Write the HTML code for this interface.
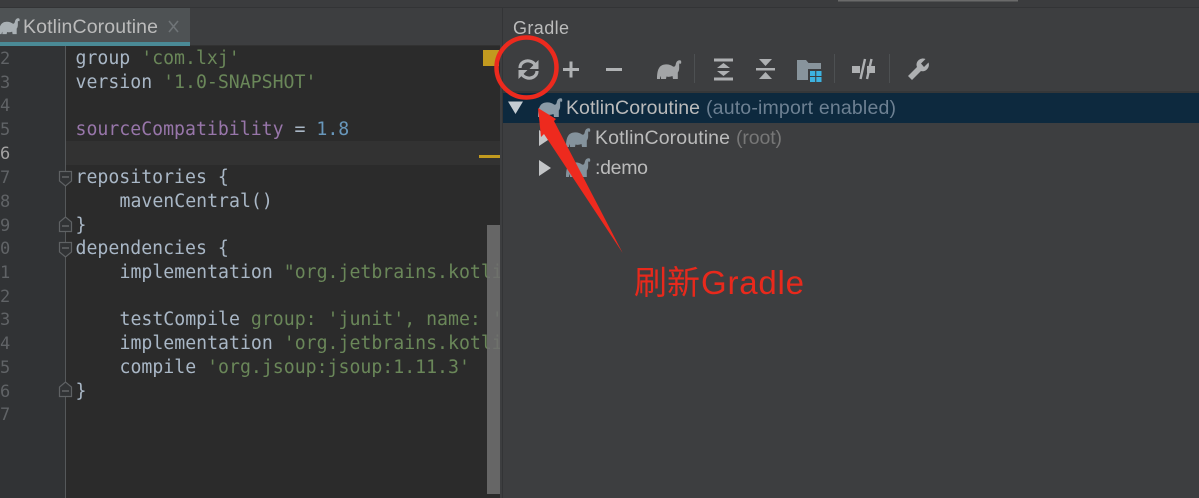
<!DOCTYPE html>
<html><head><meta charset="utf-8"><style>
html,body{margin:0;padding:0;background:#3d3e40;width:1199px;height:498px;overflow:hidden}
svg{display:block;filter:blur(.35px)}
.c{font-family:"DejaVu Sans Mono","Liberation Mono",monospace;font-size:18.2px;fill:#a9b7c6}
.s{fill:#6a8759}.p{fill:#9876aa}.n{fill:#6897bb}
.ln{font-family:"DejaVu Sans Mono",monospace;font-size:17px;fill:#606366}
.u{font-family:"Liberation Sans",sans-serif;font-size:19.5px;fill:#bbbbbb}
.d{fill:#84929c}
</style></head><body>
<svg width="1199" height="498" viewBox="0 0 1199 498" xmlns="http://www.w3.org/2000/svg">
<defs>
<path id="e" d="M0 19C0 10 2 5 8 4.500C11 4 14 5 16 6.500C17.500 7.300 18.500 6 18.800 4C19.300 1.500 21 0 23 .3C24.300 .6 24.500 2 24 3.800L22.300 3.500C21.800 6 23 10 20.800 12.500L20.800 19L16 19L15.500 16C13 17 11 17 9.500 16.500L9 19L4 19L4 16C3.300 17 3 18 3 19Z"/>
<clipPath id="ed"><rect x="0" y="46" width="500" height="452"/></clipPath>
</defs>
<rect width="1199" height="498" fill="#3d3e40"/>
<rect width="1199" height="7" fill="#3b3c3e"/>
<rect y="7" width="1199" height="1" fill="#333436"/>
<rect x="838" y="0" width="180" height="1.500" fill="#6a6a6a"/>
<!-- tab -->
<rect x="0" y="8" width="190" height="35" fill="#4e5254"/>
<rect x="0" y="42" width="190" height="4" fill="#4a8a96"/>
<rect x="190" y="45" width="310" height="1" fill="#323232"/>
<use href="#e" transform="translate(-1 18) scale(.85)" fill="#a9b0b4"/>
<text class="u" x="23" y="33" textLength="135">KotlinCoroutine</text>
<path d="M169 21L178 32M178 21L169 32" stroke="#6f7477" stroke-width="1.600"/>
<!-- editor -->
<rect x="0" y="46" width="500" height="452" fill="#2b2b2b"/>
<rect x="0" y="46" width="65" height="452" fill="#313335"/>
<rect x="65" y="141" width="435" height="24" fill="#323232"/>
<rect x="65" y="46" width="1" height="452" fill="#55585a"/>
<g class="ln">
<text x="0" y="64">2</text><text x="0" y="88">3</text><text x="0" y="111">4</text><text x="0" y="135">5</text>
<text x="0" y="159" style="fill:#a4a3a3">6</text><text x="0" y="183">7</text><text x="0" y="207">8</text><text x="0" y="231">9</text>
<text x="0" y="254">0</text><text x="0" y="278">1</text><text x="0" y="302">2</text><text x="0" y="325">3</text>
<text x="0" y="349">4</text><text x="0" y="373">5</text><text x="0" y="397">6</text><text x="0" y="420">7</text>
</g>
<g fill="#313335" stroke="#5f6264" stroke-width="1.200">
<path d="M59.500 171.500H71.500V181L65.500 186L59.500 181Z"/>
<path d="M59.500 231.500H71.500V222L65.500 217L59.500 222Z"/>
<path d="M59.500 242.500H71.500V252L65.500 257L59.500 252Z"/>
<path d="M59.500 396.500H71.500V387L65.500 382L59.500 387Z"/>
</g>
<path d="M62 177H69M62 226H69M62 248H69M62 391H69" stroke="#7a7d7f" stroke-width="1"/>
<g class="c" clip-path="url(#ed)">
<text x="75.500" y="64">group <tspan class="s">'com.lxj'</tspan></text>
<text x="75.500" y="88">version <tspan class="s">'1.0-SNAPSHOT'</tspan></text>
<text x="75.500" y="135"><tspan class="p">sourceCompatibility</tspan> = <tspan class="n">1.8</tspan></text>
<text x="75.500" y="183">repositories {</text>
<text x="119.500" y="207">mavenCentral()</text>
<text x="75.500" y="231">}</text>
<text x="75.500" y="254">dependencies {</text>
<text x="119.500" y="278">implementation <tspan class="s">"org.jetbrains.kotlin</tspan></text>
<text x="119.500" y="325">testCompile <tspan class="s">group: 'junit', name: '</tspan></text>
<text x="119.500" y="349">implementation <tspan class="s">'org.jetbrains.kotlin</tspan></text>
<text x="119.500" y="373">compile <tspan class="s">'org.jsoup:jsoup:1.11.3'</tspan></text>
<text x="75.500" y="397">}</text>
</g>
<rect x="487" y="225" width="13" height="269" fill="#6e6e6e" opacity=".88"/>
<rect x="483" y="50" width="16" height="16" fill="#c29a1f"/>
<rect x="479" y="155" width="24" height="3" fill="#c29a1f"/>
<!-- gradle panel -->
<rect x="500" y="8" width="699" height="490" fill="#3d3e40"/>
<rect x="502" y="8" width="1" height="490" fill="#333436"/>
<text class="u" x="513" y="34" textLength="56" style="font-size:18px">Gradle</text>
<rect x="503" y="91" width="696" height="2" fill="#353739"/>
<rect x="503" y="93" width="696" height="30" fill="#0d293e"/>
<!-- toolbar -->
<g fill="none" stroke="#aeb0b2" stroke-width="3.200">
<path d="M520 68C520 62.500 526 59.500 531 61.500C533 62.300 534.500 63.500 535 65"/>
<path d="M537 71C537 76.500 531 79.500 526 77.500C524 76.700 522.500 75.500 522 74"/>
</g>
<path d="M538.500 60V69H529.500ZM518.500 79V70H527.500Z" fill="#aeb0b2"/>
<path d="M563 69.500H579M571 61.500V77.500" stroke="#b0b2b4" stroke-width="3"/>
<path d="M606 69.500H622" stroke="#b0b2b4" stroke-width="3"/>
<use href="#e" transform="translate(657 60)" fill="#a3a5a7"/>
<path d="M694.500 54V83M834.500 54V83M889.500 54V83" stroke="#4d5052" stroke-width="1"/>
<g fill="#aeb0b2">
<rect x="714" y="58.500" width="19" height="3"/><rect x="714" y="77.500" width="19" height="3"/>
<path d="M723.500 63L730 68H717ZM723.500 76L730 71H717Z"/>
<rect x="756" y="68" width="19" height="2.500"/>
<path d="M759 59H772L765.500 66ZM759 79H772L765.500 72Z"/>
<rect x="852" y="66" width="8" height="7"/>
<rect x="867" y="66" width="8" height="7"/>
</g>
<path d="M860.500 79L865 59M867 79L871.500 59" stroke="#aeb0b2" stroke-width="2.400"/>
<path d="M797 60H806L808.500 63H821V80H797Z" fill="#88949c"/>
<rect x="808" y="69" width="16" height="15" fill="#3d3e40"/>
<g fill="#3db2e0"><rect x="810" y="71" width="5.200" height="5"/><rect x="816.300" y="71" width="5.200" height="5"/><rect x="810" y="77" width="5.200" height="5"/><rect x="816.300" y="77" width="5.200" height="5"/></g>
<path d="M908 76L917 67C915 62 920 57 925.500 59L921 63.500L924 67L928.500 62.500C930.500 68 925 72.500 921 71L912 80Z" fill="#aeb0b2"/>
<!-- tree -->
<path d="M508 101.500H523L515.500 114Z" fill="#c5cdd3"/>
<use href="#e" transform="translate(538 98)" fill="#8a9aa6"/>
<text class="u" x="566" y="114" textLength="134">KotlinCoroutine</text>
<text class="u" x="706" y="114" textLength="190" style="fill:#6d8092">(auto-import enabled)</text>
<path d="M539 130V146L551 138Z" fill="#c3c5c7"/>
<use href="#e" transform="translate(566 128)" class="d"/>
<text class="u" x="595" y="144" textLength="135">KotlinCoroutine</text>
<text class="u" x="736" y="144" textLength="46" style="fill:#777">(root)</text>
<path d="M539 160V176L551 168Z" fill="#c3c5c7"/>
<use href="#e" transform="translate(566 158)" class="d"/>
<text class="u" x="595" y="174" textLength="53">:demo</text>
<!-- annotation -->
<circle cx="526.500" cy="67.500" r="30" fill="none" stroke="#ec2a1e" stroke-width="4.500"/>
<path d="M538 108L556 119L554 121L622.700 253L544 134L541 137Z" fill="#ee2a1e"/>
<text x="634" y="294" style="font-family:'Liberation Sans','Noto Sans CJK SC',sans-serif;font-size:33px;fill:#e8291c">刷新</text>
<text x="701" y="294" textLength="103" style="font-family:'Liberation Sans',sans-serif;font-size:33px;fill:#e8291c">Gradle</text>
</svg>
</body></html>
